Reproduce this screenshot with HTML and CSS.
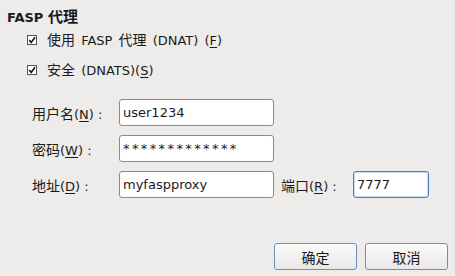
FILE: index.html
```html
<!DOCTYPE html>
<html lang="zh">

<head>
    <meta charset="utf-8">
    <link rel="stylesheet" href="styles.css">
</head>

<body>
    <div class="dialog">
        <div class="title">FASP <span class="zh">代理</span></div>
        <div class="checks">
            <label class="check">
                <svg class="box" width="10" height="10" viewBox="0 0 10 10">
                    <rect x="0.5" y="0.5" width="9" height="9" fill="#fff" stroke="#555"/>
                    <path d="M2.2 5 L4.2 7.4 L8 2.2" fill="none" stroke="#111" stroke-width="1.6"/>
                </svg>
                <span><span class="zh">使用</span> FASP <span class="zh">代理</span> (DNAT) (<u>F</u>)</span>
            </label>
            <label class="check">
                <svg class="box" width="10" height="10" viewBox="0 0 10 10">
                    <rect x="0.5" y="0.5" width="9" height="9" fill="#fff" stroke="#555"/>
                    <path d="M2.2 5 L4.2 7.4 L8 2.2" fill="none" stroke="#111" stroke-width="1.6"/>
                </svg>
                <span><span class="zh">安全</span> (DNATS)(<u>S</u>)</span>
            </label>
        </div>
        <div class="fields">
            <label class="lbl" for="user"><span class="zh">用户名</span>(<u>N</u>) :</label>
            <input id="user" class="entry" type="text" value="user1234">
            <label class="lbl" for="pass"><span class="zh">密码</span>(<u>W</u>) :</label>
            <input id="pass" class="entry secret" type="text" value="*************">
            <label class="lbl" for="host"><span class="zh">地址</span>(<u>D</u>) :</label>
            <input id="host" class="entry" type="text" value="myfaspproxy">
            <label class="lbl port-lbl" for="port"><span class="zh">端口</span>(<u>R</u>) :</label>
            <input id="port" class="entry focused" type="text" value="7777">
        </div>
        <div class="buttons">
            <button class="btn default"><span class="zh">确定</span></button>
            <button class="btn"><span class="zh">取消</span></button>
        </div>
    </div>
</body>

</html>
```

FILE: styles.css
```css
body {
    margin: 0;
    background-color: #edeceb;
    font-family: "DejaVu Sans", "Noto Sans CJK SC", sans-serif;
    font-size: 13px;
    color: #1a1a1a;
}

.zh {
    font-family: "Noto Sans CJK SC", sans-serif;
    font-size: 14px;
}

.dialog {
    height: 276px;
    box-sizing: border-box;
    padding: 6px 7px 6px 7px;
    display: flex;
    flex-direction: column;
}

.title {
    font-weight: bold;
    height: 20px;
    line-height: 20px;
}

.title .zh {
    font-size: 15px;
}

.checks {
    margin-left: 20px;
    margin-top: 4px;
    display: flex;
    flex-direction: column;
    gap: 12px;
}

.check {
    display: flex;
    align-items: center;
    gap: 10px;
    height: 18px;
    word-spacing: 2px;
}

.box {
    flex: none;
    margin-top: 2px;
}

u {
    text-decoration-thickness: 1px;
    text-underline-offset: 2px;
}

.fields {
    margin-left: 25px;
    margin-top: 21px;
    display: grid;
    grid-template-columns: 87px 155px 79px 76px;
    grid-auto-rows: 27px;
    row-gap: 9px;
    align-items: center;
}

.lbl {
    grid-column: 1;
}

.port-lbl {
    grid-column: 3;
    padding-left: 7px;
}

.entry {
    grid-column: 2;
    box-sizing: border-box;
    height: 27px;
    width: 100%;
    margin: 0;
    padding: 0 3px;
    border: 1px solid #8d8a86;
    border-radius: 3px;
    background: #fff;
    font: inherit;
    color: #1a1a1a;
    outline: none;
}

.entry.secret {
    letter-spacing: 2.4px;
}

.entry.focused {
    grid-column: 4;
    border-color: #4a7fc1;
    box-shadow: inset 0 0 0 1px #c9dbef;
}

.buttons {
    margin-top: auto;
    display: flex;
    justify-content: flex-end;
    gap: 8px;
}

.btn {
    width: 83px;
    height: 27px;
    margin: 0;
    border: 1px solid #8d8a86;
    border-radius: 3px;
    background: linear-gradient(#fbfbfa, #e9e8e6);
    font: inherit;
    color: #1a1a1a;
}

.btn.default {
    border-color: #6f90bd;
}
```
